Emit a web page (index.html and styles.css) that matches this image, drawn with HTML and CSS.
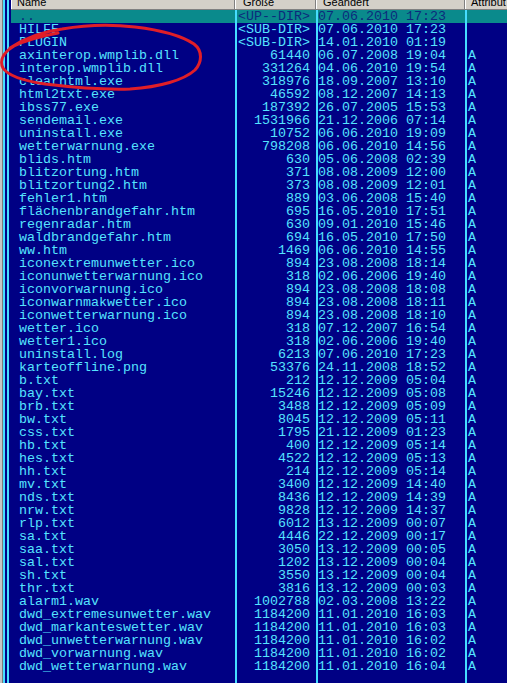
FILE: index.html
```html
<!DOCTYPE html>
<html>
<head>
<meta charset="utf-8">
<link rel="stylesheet" href="styles.css">
</head>
<body>
<div class="frame">
  <div class="edge"></div>
  <div class="main">
    <div class="header">
      <div class="hcell hname"><span>Name</span></div>
      <div class="hcell hsize"><span>Größe</span></div>
      <div class="hcell hdate"><span>Geändert</span></div>
      <div class="hcell hattr"><span>Attribut</span></div>
    </div>
    <div class="list">
      <div class="row sel"><span class="name">..</span><span class="size">&lt;UP--DIR&gt;</span><span class="date">07.06.2010 17:23</span><span class="attr"></span></div>
      <div class="row"><span class="name">HILFE</span><span class="size">&lt;SUB-DIR&gt;</span><span class="date">07.06.2010 17:23</span><span class="attr"></span></div>
      <div class="row"><span class="name">PLUGIN</span><span class="size">&lt;SUB-DIR&gt;</span><span class="date">14.01.2010 01:19</span><span class="attr"></span></div>
      <div class="row"><span class="name">axinterop.wmplib.dll</span><span class="size">61440</span><span class="date">06.07.2008 19:04</span><span class="attr">A</span></div>
      <div class="row"><span class="name">interop.wmplib.dll</span><span class="size">331264</span><span class="date">04.06.2010 19:54</span><span class="attr">A</span></div>
      <div class="row"><span class="name">clearhtml.exe</span><span class="size">318976</span><span class="date">18.09.2007 13:10</span><span class="attr">A</span></div>
      <div class="row"><span class="name">html2txt.exe</span><span class="size">46592</span><span class="date">08.12.2007 14:13</span><span class="attr">A</span></div>
      <div class="row"><span class="name">ibss77.exe</span><span class="size">187392</span><span class="date">26.07.2005 15:53</span><span class="attr">A</span></div>
      <div class="row"><span class="name">sendemail.exe</span><span class="size">1531966</span><span class="date">21.12.2006 07:14</span><span class="attr">A</span></div>
      <div class="row"><span class="name">uninstall.exe</span><span class="size">10752</span><span class="date">06.06.2010 19:09</span><span class="attr">A</span></div>
      <div class="row"><span class="name">wetterwarnung.exe</span><span class="size">798208</span><span class="date">06.06.2010 14:56</span><span class="attr">A</span></div>
      <div class="row"><span class="name">blids.htm</span><span class="size">630</span><span class="date">05.06.2008 02:39</span><span class="attr">A</span></div>
      <div class="row"><span class="name">blitzortung.htm</span><span class="size">371</span><span class="date">08.08.2009 12:00</span><span class="attr">A</span></div>
      <div class="row"><span class="name">blitzortung2.htm</span><span class="size">373</span><span class="date">08.08.2009 12:01</span><span class="attr">A</span></div>
      <div class="row"><span class="name">fehler1.htm</span><span class="size">889</span><span class="date">03.06.2008 15:40</span><span class="attr">A</span></div>
      <div class="row"><span class="name">flächenbrandgefahr.htm</span><span class="size">695</span><span class="date">16.05.2010 17:51</span><span class="attr">A</span></div>
      <div class="row"><span class="name">regenradar.htm</span><span class="size">630</span><span class="date">09.01.2010 15:46</span><span class="attr">A</span></div>
      <div class="row"><span class="name">waldbrandgefahr.htm</span><span class="size">694</span><span class="date">16.05.2010 17:50</span><span class="attr">A</span></div>
      <div class="row"><span class="name">ww.htm</span><span class="size">1469</span><span class="date">06.06.2010 14:55</span><span class="attr">A</span></div>
      <div class="row"><span class="name">iconextremunwetter.ico</span><span class="size">894</span><span class="date">23.08.2008 18:14</span><span class="attr">A</span></div>
      <div class="row"><span class="name">iconunwetterwarnung.ico</span><span class="size">318</span><span class="date">02.06.2006 19:40</span><span class="attr">A</span></div>
      <div class="row"><span class="name">iconvorwarnung.ico</span><span class="size">894</span><span class="date">23.08.2008 18:08</span><span class="attr">A</span></div>
      <div class="row"><span class="name">iconwarnmakwetter.ico</span><span class="size">894</span><span class="date">23.08.2008 18:11</span><span class="attr">A</span></div>
      <div class="row"><span class="name">iconwetterwarnung.ico</span><span class="size">894</span><span class="date">23.08.2008 18:10</span><span class="attr">A</span></div>
      <div class="row"><span class="name">wetter.ico</span><span class="size">318</span><span class="date">07.12.2007 16:54</span><span class="attr">A</span></div>
      <div class="row"><span class="name">wetter1.ico</span><span class="size">318</span><span class="date">02.06.2006 19:40</span><span class="attr">A</span></div>
      <div class="row"><span class="name">uninstall.log</span><span class="size">6213</span><span class="date">07.06.2010 17:23</span><span class="attr">A</span></div>
      <div class="row"><span class="name">karteoffline.png</span><span class="size">53376</span><span class="date">24.11.2008 18:52</span><span class="attr">A</span></div>
      <div class="row"><span class="name">b.txt</span><span class="size">212</span><span class="date">12.12.2009 05:04</span><span class="attr">A</span></div>
      <div class="row"><span class="name">bay.txt</span><span class="size">15246</span><span class="date">12.12.2009 05:08</span><span class="attr">A</span></div>
      <div class="row"><span class="name">brb.txt</span><span class="size">3488</span><span class="date">12.12.2009 05:09</span><span class="attr">A</span></div>
      <div class="row"><span class="name">bw.txt</span><span class="size">8045</span><span class="date">12.12.2009 05:11</span><span class="attr">A</span></div>
      <div class="row"><span class="name">css.txt</span><span class="size">1795</span><span class="date">21.12.2009 01:23</span><span class="attr">A</span></div>
      <div class="row"><span class="name">hb.txt</span><span class="size">400</span><span class="date">12.12.2009 05:14</span><span class="attr">A</span></div>
      <div class="row"><span class="name">hes.txt</span><span class="size">4522</span><span class="date">12.12.2009 05:13</span><span class="attr">A</span></div>
      <div class="row"><span class="name">hh.txt</span><span class="size">214</span><span class="date">12.12.2009 05:14</span><span class="attr">A</span></div>
      <div class="row"><span class="name">mv.txt</span><span class="size">3400</span><span class="date">12.12.2009 14:40</span><span class="attr">A</span></div>
      <div class="row"><span class="name">nds.txt</span><span class="size">8436</span><span class="date">12.12.2009 14:39</span><span class="attr">A</span></div>
      <div class="row"><span class="name">nrw.txt</span><span class="size">9828</span><span class="date">12.12.2009 14:37</span><span class="attr">A</span></div>
      <div class="row"><span class="name">rlp.txt</span><span class="size">6012</span><span class="date">13.12.2009 00:07</span><span class="attr">A</span></div>
      <div class="row"><span class="name">sa.txt</span><span class="size">4446</span><span class="date">22.12.2009 00:17</span><span class="attr">A</span></div>
      <div class="row"><span class="name">saa.txt</span><span class="size">3050</span><span class="date">13.12.2009 00:05</span><span class="attr">A</span></div>
      <div class="row"><span class="name">sal.txt</span><span class="size">1202</span><span class="date">13.12.2009 00:04</span><span class="attr">A</span></div>
      <div class="row"><span class="name">sh.txt</span><span class="size">3550</span><span class="date">13.12.2009 00:04</span><span class="attr">A</span></div>
      <div class="row"><span class="name">thr.txt</span><span class="size">3816</span><span class="date">13.12.2009 00:03</span><span class="attr">A</span></div>
      <div class="row"><span class="name">alarm1.wav</span><span class="size">1002788</span><span class="date">02.03.2008 13:22</span><span class="attr">A</span></div>
      <div class="row"><span class="name">dwd_extremesunwetter.wav</span><span class="size">1184200</span><span class="date">11.01.2010 16:03</span><span class="attr">A</span></div>
      <div class="row"><span class="name">dwd_markanteswetter.wav</span><span class="size">1184200</span><span class="date">11.01.2010 16:03</span><span class="attr">A</span></div>
      <div class="row"><span class="name">dwd_unwetterwarnung.wav</span><span class="size">1184200</span><span class="date">11.01.2010 16:02</span><span class="attr">A</span></div>
      <div class="row"><span class="name">dwd_vorwarnung.wav</span><span class="size">1184200</span><span class="date">11.01.2010 16:02</span><span class="attr">A</span></div>
      <div class="row"><span class="name">dwd_wetterwarnung.wav</span><span class="size">1184200</span><span class="date">11.01.2010 16:04</span><span class="attr">A</span></div>
      <div class="row filler"><span class="name"></span><span class="size"></span><span class="date"></span><span class="attr"></span></div>
    </div>
  </div>
</div>
<svg class="scribble" width="507" height="683" viewBox="0 0 507 683" xmlns="http://www.w3.org/2000/svg">
  <path d="M 10 48 C 22 40, 40 32, 62 29 C 85 25, 110 24, 135 27 C 160 30, 182 36, 194 44 C 203 51, 202 62, 195 70 C 184 80, 160 87, 130 89 C 100 90, 70 87, 45 84 C 25 81, 8 76, 3 68 C -1 60, 4 52, 14 46 C 26 40, 42 36, 58 33" fill="none" stroke="#e01e28" stroke-width="3" stroke-linecap="round" stroke-linejoin="round"/>
</svg>
</body>
</html>
```

FILE: styles.css
```css
html, body {
  margin: 0;
  padding: 0;
}
body {
  width: 507px;
  height: 683px;
  overflow: hidden;
  background: #000084;
  position: relative;
}
.frame {
  display: flex;
  height: 683px;
}
.edge {
  width: 11px;
  flex: none;
  background: linear-gradient(to right,
    #c4c4c4 0, #c4c4c4 2px,
    #7a7a7a 2px, #7a7a7a 3px,
    #46dcff 3px, #46dcff 5px,
    #000084 5px, #000084 7px,
    #46dcff 7px, #46dcff 9px,
    #000084 9px, #000084 11px);
}
.main {
  flex: 1;
  display: flex;
  flex-direction: column;
  min-width: 0;
}
.header {
  height: 9px;
  flex: none;
  display: grid;
  grid-template-columns: 224px 81px 149px 1fr;
  background: #d4d0c8;
  border-bottom: 1px solid #808080;
  overflow: hidden;
  font-family: "Liberation Sans", Arial, sans-serif;
  font-size: 11px;
  line-height: 11px;
  color: #000;
}
.hcell {
  overflow: hidden;
  white-space: nowrap;
  border-left: 1px solid #ffffff;
  box-shadow: inset -1px 0 0 #808080;
}
.hcell span {
  display: block;
  margin-top: -3px;
}
.hname { padding-left: 5px; }
.hsize { padding-left: 7px; }
.hdate { padding-left: 6px; }
.hattr { padding-left: 5px; box-shadow: none; }
.list {
  flex: 1;
  display: flex;
  flex-direction: column;
}
.row {
  display: grid;
  grid-template-columns: 224px 81px 149px 1fr;
  height: 13px;
  flex: none;
  font-family: "Liberation Mono", "Courier New", monospace;
  font-size: 13.333px;
  line-height: 13px;
  color: #55e4ff;
  white-space: pre;
}
.row.filler {
  flex: 1;
  height: auto;
}
.row span {
  overflow: hidden;
}
.name {
  padding-left: 8px;
}
.size {
  border-left: 2px solid #46dcff;
  text-align: right;
  padding-right: 6px;
}
.date {
  border-left: 2px solid #46dcff;
  padding-left: 0;
}
.attr {
  border-left: 2px solid #46dcff;
  padding-left: 1px;
}
.row.sel {
  background: #0a8a8c;
  color: #0c2a7c;
}
.scribble {
  position: absolute;
  left: 0;
  top: 0;
  pointer-events: none;
}
```
